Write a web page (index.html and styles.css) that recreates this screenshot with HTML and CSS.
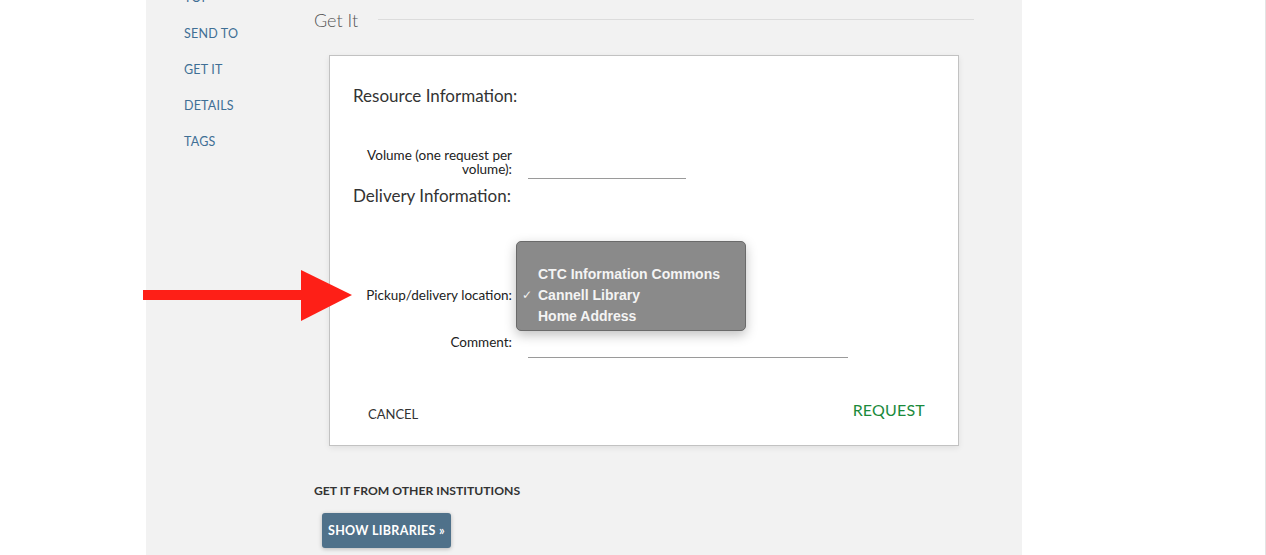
FILE: index.html
```html
<!DOCTYPE html>
<html>
<head>
<meta charset="utf-8">
<link rel="stylesheet" href="styles.css">
</head>
<body>
<div class="page">
  <div class="gutter-left"></div>
  <div class="panel">
    <nav class="side-nav">
      <a>TOP</a>
      <a>SEND TO</a>
      <a>GET IT</a>
      <a>DETAILS</a>
      <a>TAGS</a>
    </nav>
    <main class="main">
      <div class="section-head">
        <h2>Get It</h2>
        <span class="rule"></span>
      </div>
      <div class="card">
        <h3 class="group-title">Resource Information:</h3>
        <div class="row row-volume">
          <label class="lbl">Volume (one request per volume):</label>
          <div class="field field-volume"></div>
        </div>
        <h3 class="group-title group-delivery">Delivery Information:</h3>
        <div class="row row-pickup">
          <label class="lbl">Pickup/delivery location:</label>
        </div>
        <div class="row row-comment">
          <label class="lbl">Comment:</label>
          <div class="field field-comment"></div>
        </div>
        <div class="card-actions">
          <span class="btn-cancel">CANCEL</span>
          <span class="btn-request">REQUEST</span>
        </div>
        <div class="menu">
          <div class="menu-item">CTC Information Commons</div>
          <div class="menu-item checked"><span class="check">✓</span>Cannell Library</div>
          <div class="menu-item">Home Address</div>
        </div>
      </div>
      <h4 class="other-title">GET IT FROM OTHER INSTITUTIONS</h4>
      <span class="btn-libraries">SHOW LIBRARIES »</span>
    </main>
  </div>
  <div class="gutter-right"></div>
</div>
<svg class="arrow" width="212" height="52" viewBox="0 0 212 52">
  <rect x="0" y="20" width="162" height="10" fill="#fe1f17"/>
  <polygon points="158,0 209,25 158,51" fill="#fe1f17"/>
</svg>
</body>
</html>
```
FILE: styles.css
```css
html, body {
  margin: 0;
  padding: 0;
  background: #fff;
}
body {
  font-family: Lato, "Open Sans", sans-serif;
  color: #333;
  overflow: hidden;
  height: 555px;
}
.page {
  display: flex;
  height: 555px;
}
.gutter-left {
  width: 146px;
  flex: none;
}
.panel {
  width: 876px;
  flex: none;
  background: #f2f2f2;
  display: flex;
}
.gutter-right {
  flex: 1;
  border-right: 1px solid #e3e3e3;
}
.side-nav {
  width: 130px;
  padding-left: 38px;
  box-sizing: border-box;
  display: flex;
  flex-direction: column;
  margin-top: -20px;
  flex: none;
}
.side-nav a {
  display: block;
  line-height: 36px;
  font-size: 12.5px;
  color: #3f6f95;
  letter-spacing: 0.2px;
}
.main {
  width: 660px;
  padding-left: 38px;
  flex: none;
}
.section-head {
  display: flex;
  align-items: center;
  padding-top: 8px;
  height: 24px;
}
.section-head h2 {
  margin: 0;
  flex: none;
  white-space: nowrap;
  font-size: 18px;
  font-weight: 300;
  color: #555;
  line-height: 24px;
}
.rule {
  display: block;
  flex: 1;
  margin-left: 20px;
  border-top: 1px solid #dcdcdc;
  margin-top: -2px;
}
.card {
  position: relative;
  margin-top: 23px;
  margin-left: 15px;
  width: 630px;
  box-sizing: border-box;
  background: #fff;
  border: 1px solid #c2c2c2;
  box-shadow: 0 2px 6px rgba(0,0,0,0.08);
  padding: 29px 24px 25px 23px;
}
.group-title {
  margin: 0;
  font-size: 17px;
  font-weight: 400;
  line-height: 22px;
  color: #333;
}
.group-delivery {
  margin-top: 6px;
}
.row {
  display: flex;
  align-items: flex-start;
}
.lbl {
  width: 159px;
  flex: none;
  text-align: right;
  font-size: 13.5px;
  color: #222;
}
.row-volume {
  margin-top: 41px;
}
.row-volume .lbl {
  line-height: 14px;
  padding-left: 8px;
  box-sizing: border-box;
}
.field {
  margin-left: 16px;
  border-bottom: 1px solid #9a9a9a;
}
.field-volume {
  width: 158px;
  height: 30px;
}
.row-pickup {
  margin-top: 78px;
  height: 20px;
}
.row-pickup .lbl {
  line-height: 20px;
}
.row-comment {
  margin-top: 28px;
}
.row-comment .lbl {
  line-height: 18px;
}
.field-comment {
  width: 320px;
  height: 24px;
}
.card-actions {
  display: flex;
  justify-content: space-between;
  align-items: flex-start;
  margin-top: 42px;
  height: 20px;
}
.btn-cancel {
  margin-left: 15px;
  margin-top: 6px;
  font-size: 13px;
  line-height: 16px;
  color: #333;
}
.btn-request {
  margin-right: 9px;
  font-size: 16px;
  line-height: 20px;
  color: #1b8a3c;
  letter-spacing: 0.2px;
}
.menu {
  position: absolute;
  left: 186px;
  top: 185px;
  width: 230px;
  height: 90px;
  box-sizing: border-box;
  background: #8a8a8a;
  border: 1px solid #6a6a6a;
  border-radius: 5px;
  box-shadow: 0 4px 12px rgba(0,0,0,0.25);
  padding-top: 22px;
  font-family: "Liberation Sans", Arial, sans-serif;
}
.menu-item {
  position: relative;
  padding-left: 21px;
  font-size: 14px;
  font-weight: 700;
  line-height: 21px;
  color: #f4f4f4;
}
.check {
  position: absolute;
  left: 5px;
  font-weight: 400;
  font-family: "DejaVu Sans", sans-serif;
  font-size: 12px;
}
.other-title {
  margin: 37px 0 0 0;
  font-size: 12.2px;
  font-weight: 700;
  line-height: 16px;
  color: #333;
}
.btn-libraries {
  display: inline-block;
  margin-top: 14px;
  margin-left: 8px;
  height: 35px;
  line-height: 35px;
  padding: 0 6px;
  width: 129px;
  box-sizing: border-box;
  background: #4f718a;
  border-radius: 3px;
  color: #fff;
  font-size: 12.5px;
  letter-spacing: 0.3px;
  font-weight: 700;
  box-shadow: 0 1px 4px rgba(0,0,0,0.25);
  white-space: nowrap;
}
.arrow {
  position: absolute;
  left: 143px;
  top: 270px;
}
```
